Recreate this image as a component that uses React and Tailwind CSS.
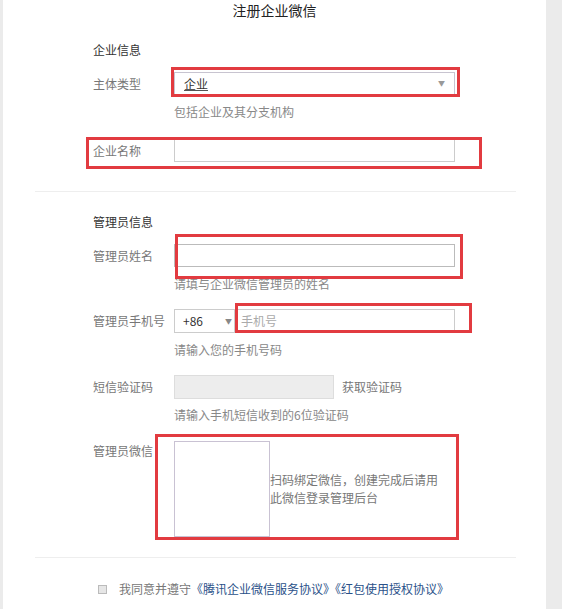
import React from 'react';

const Label = ({ children }) => (
    <div className="w-[81px] shrink-0 text-[12px] leading-[20px] text-[#777]">{children}</div>
);

const Hint = ({ children, className = '' }) => (
    <div className={`pl-[81px] text-[12px] leading-[18px] text-[#888] ${className}`}>{children}</div>
);

const App = () => {
    return (
        <div className="relative w-[562px] h-[609px] overflow-hidden bg-[#ebebeb] font-['Noto_Sans_CJK_SC','Microsoft_YaHei',sans-serif]">
            <div className="ml-[3px] w-[543px] h-full bg-white">
                {/* Title */}
                <div className="h-[19px] pt-[1px] text-center text-[14px] leading-[18px] text-[#222]">注册企业微信</div>

                {/* Company info */}
                <div className="pl-[90px]">
                    <div className="mt-[21px] text-[12px] leading-[20px] text-[#333]">企业信息</div>
                    <div className="mt-[12px] flex items-center">
                        <Label>主体类型</Label>
                        <div className="w-[281px] h-[23px] border border-[#c8c4d0] flex items-center justify-between px-[9px]">
                            <span className="text-[12px] text-[#333] underline decoration-[#555]">企业</span>
                            <span className="text-[7px] text-[#999]">▼</span>
                        </div>
                    </div>
                    <Hint className="mt-[8px]">包括企业及其分支机构</Hint>
                    <div className="mt-[18px] flex items-center">
                        <Label>企业名称</Label>
                        <div className="w-[281px] h-[23px] border border-[#cccccc]" />
                    </div>
                </div>

                <div className="mt-[29px] ml-[32px] w-[481px] h-px bg-[#eeeeee]" />

                {/* Admin info */}
                <div className="pl-[90px]">
                    <div className="mt-[20px] text-[12px] leading-[20px] text-[#333]">管理员信息</div>
                    <div className="mt-[12px] flex items-center">
                        <Label>管理员姓名</Label>
                        <div className="w-[281px] h-[23px] border border-[#bbbbbb]" />
                    </div>
                    <Hint className="mt-[8px]">请填与企业微信管理员的姓名</Hint>
                    <div className="mt-[16px] flex items-center">
                        <Label>管理员手机号</Label>
                        <div className="flex w-[281px] h-[24px]">
                            <div className="w-[61px] h-full border border-[#cccccc] flex items-center justify-between pl-[8px] pr-[2px]">
                                <span className="text-[12px] text-[#333]">+86</span>
                                <span className="text-[7px] text-[#888]">▼</span>
                            </div>
                            <div className="flex-1 h-full border border-l-0 border-[#cccccc] flex items-center pl-[6px]">
                                <span className="text-[12px] text-[#aaa]">手机号</span>
                            </div>
                        </div>
                    </div>
                    <Hint className="mt-[8px]">请输入您的手机号码</Hint>
                    <div className="mt-[16px] flex items-center">
                        <Label>短信验证码</Label>
                        <div className="w-[160px] h-[24px] border border-[#dddddd] bg-[#ededed]" />
                        <span className="ml-[8px] text-[12px] text-[#777]">获取验证码</span>
                    </div>
                    <Hint className="mt-[7px]">请输入手机短信收到的6位验证码</Hint>
                    <div className="mt-[17px] flex items-start">
                        <Label>管理员微信</Label>
                        <div className="w-[96px] h-[96px] border border-[#c9c2d3] shrink-0" />
                        <div className="mt-[30px] w-[172px] text-[12px] leading-[18px] text-[#777]">
                            扫码绑定微信，创建完成后请用此微信登录管理后台
                        </div>
                    </div>
                </div>

                <div className="mt-[20px] ml-[32px] w-[481px] h-px bg-[#eeeeee]" />

                {/* Agreement */}
                <div className="mt-[21px] pl-[95px] flex items-center text-[12px] leading-[20px]">
                    <span className="w-[9px] h-[9px] border border-[#bbbbbb] bg-[#e6e6e6]" />
                    <span className="ml-[12px] text-[#777]">我同意并遵守</span>
                    <span className="text-[#2a5189]">《腾讯企业微信服务协议》《红包使用授权协议》</span>
                </div>
            </div>

            {/* Red annotation boxes */}
            <div className="absolute left-[171px] top-[67px] w-[289px] h-[30px] border-[3px] border-[#e23b40]" />
            <div className="absolute left-[86px] top-[137px] w-[396px] h-[32px] border-[3px] border-[#e23b40]" />
            <div className="absolute left-[175px] top-[234px] w-[288px] h-[45px] border-[3px] border-[#e23b40]" />
            <div className="absolute left-[235px] top-[303px] w-[237px] h-[30px] border-[3px] border-[#e23b40]" />
            <div className="absolute left-[155px] top-[434px] w-[304px] h-[106px] border-[3px] border-[#e23b40]" />
        </div>
    );
};

export default App;
